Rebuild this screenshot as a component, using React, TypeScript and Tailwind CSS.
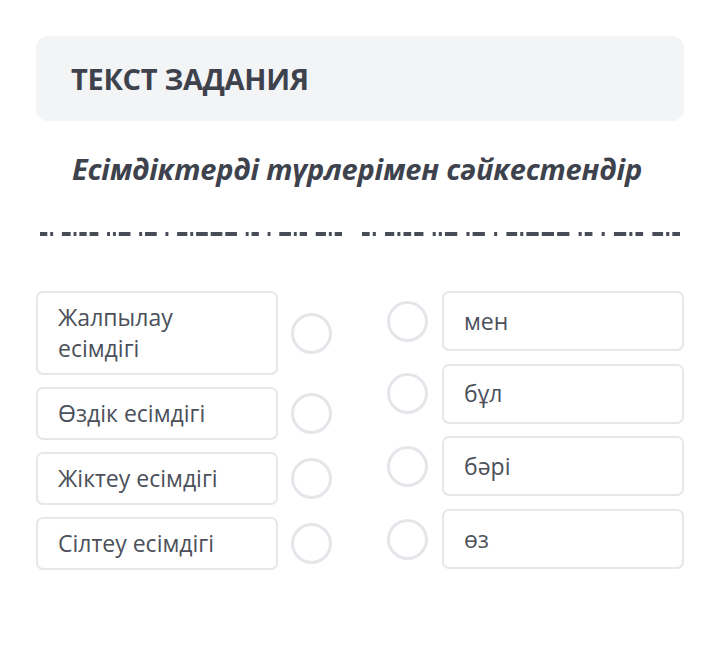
import React from "react";

const left = [
  { t: "Жалпылау есімдігі", h: "h-[84px]" },
  { t: "Өздік есімдігі", h: "h-[53px]" },
  { t: "Жіктеу есімдігі", h: "h-[53px]" },
  { t: "Сілтеу есімдігі", h: "h-[53px]" },
];
const right = ["мен", "бұл", "бәрі", "өз"];

const groups = [
  [5, 2],
  [6, 2, 5, 6],
  [2, 2, 8],
  [2, 8],
  [2],
  [7, 2, 8, 8, 8],
  [2, 5],
  [2],
  [8, 2, 5],
  [7, 2, 5],
];

function Dashes({ w }: { w: string }) {
  const rects: { x: number; w: number }[] = [];
  let x = 0;
  groups.forEach((g, gi) => {
    g.forEach((sw, i) => {
      rects.push({ x, w: sw });
      x += sw + (i < g.length - 1 ? 2 : 0);
    });
    if (gi < groups.length - 1) x += 6;
  });
  return (
    <svg viewBox={`0 0 ${x} 3`} preserveAspectRatio="none" className={`h-[4px] ${w}`}>
      {rects.map((r, i) => (
        <rect key={i} x={r.x} y={0} width={r.w} height={3} fill="#474c57" />
      ))}
    </svg>
  );
}

function Circle() {
  return <div className="w-[41px] h-[41px] rounded-full border-[3px] border-[#e4e6ea] shrink-0" />;
}

export default function App() {
  return (
    <div
      className="w-[720px] h-[652px] bg-white px-[36px] pt-[36px]"
      style={{ fontFamily: '"Open Sans", "Noto Sans", sans-serif' }}
    >
      <div className="h-[85px] bg-[#f3f4f6] rounded-[12px] flex items-center pl-[35px]">
        <span className="text-[29px] font-bold text-[#3d424d] tracking-[-0.3px]">ТЕКСТ ЗАДАНИЯ</span>
      </div>
      <div className="mt-[28px] text-center text-[29px] font-bold italic text-[#3d424d] leading-[40px] tracking-[-0.2px] pr-[6px]">
        Есімдіктерді түрлерімен сәйкестендір
      </div>
      <div className="mt-[43px] flex gap-[20px] pl-[4px]">
        <Dashes w="w-[302px]" />
        <Dashes w="w-[318px]" />
      </div>
      <div className="mt-[55px] flex justify-between">
        <div className="flex flex-col gap-[12px]">
          {left.map((l) => (
            <div key={l.t} className="flex items-center gap-[13px]">
              <div
                className={`w-[242px] ${l.h} border-2 border-[#e5e7eb] rounded-[7px] flex items-center pl-[20px] pr-[10px] text-[23px] leading-[31px] text-[#4b505a]`}
              >
                <span className={l.t === "Жалпылау есімдігі" ? "w-[130px]" : ""}>{l.t}</span>
              </div>
              <Circle />
            </div>
          ))}
        </div>
        <div className="flex flex-col gap-[12.7px]">
          {right.map((r) => (
            <div key={r} className="flex items-center gap-[14px]">
              <Circle />
              <div className="w-[242px] h-[60px] border-2 border-[#e5e7eb] rounded-[7px] flex items-center pl-[20px] text-[23px] text-[#4b505a]">
                {r}
              </div>
            </div>
          ))}
        </div>
      </div>
    </div>
  );
}
